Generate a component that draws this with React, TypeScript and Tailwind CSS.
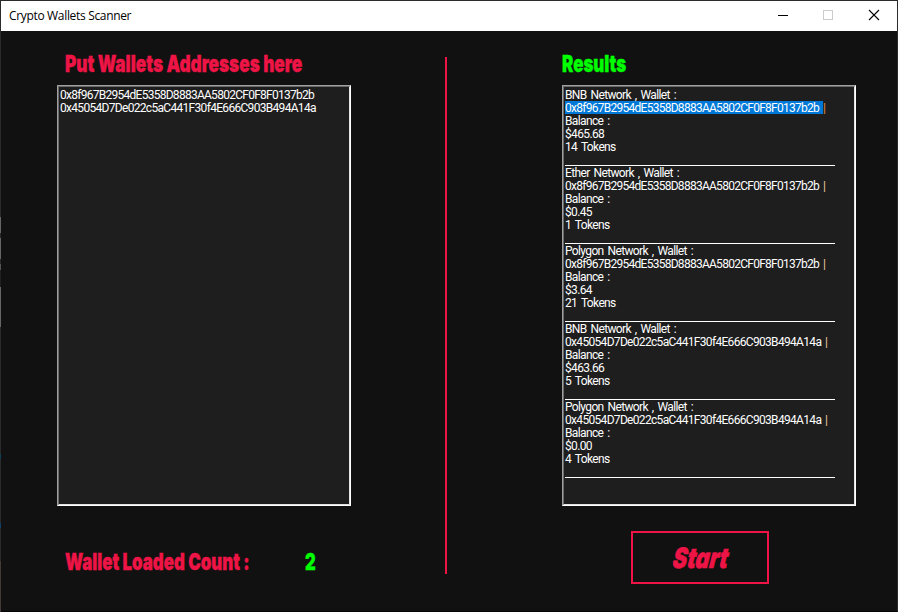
import type { ReactNode } from "react";

const FIRST = "0x8f967B2954dE5358D8883AA5802CF0F8F0137b2b";
const SECOND = "0x45054D7De022c5aC441F30f4E666C903B494A14a";

const results = [
  { network: "BNB", wallet: FIRST, balance: "$465.68", tokens: 14, selected: true },
  { network: "Ether", wallet: FIRST, balance: "$0.45", tokens: 1, selected: false },
  { network: "Polygon", wallet: FIRST, balance: "$3.64", tokens: 21, selected: false },
  { network: "BNB", wallet: SECOND, balance: "$463.66", tokens: 5, selected: false },
  { network: "Polygon", wallet: SECOND, balance: "$0.00", tokens: 4, selected: false },
];

function TextBox({ children }: { children: ReactNode }) {
  return (
    <div className="h-[421px] w-[294px] border border-t-[#a0a0a0] border-r-white border-b-white border-l-[#a0a0a0]">
      <div className="h-full border border-t-[#696969] border-r-[#e3e3e3] border-b-[#e3e3e3] border-l-[#696969] bg-[#1e1e1e] pt-px pl-px font-['Roboto',sans-serif] text-[12px] leading-[13px] tracking-[-0.64px] whitespace-pre text-white [word-spacing:1.6px]">
        {children}
      </div>
    </div>
  );
}

function Line({ children, className = "" }: { children: ReactNode; className?: string }) {
  return (
    <div className={className}>
      <div className="translate-y-px">{children}</div>
    </div>
  );
}

function Heading({ children, className }: { children: ReactNode; className: string }) {
  return (
    <div className={`origin-left font-['Inter',sans-serif] text-[23px] leading-7 font-black whitespace-pre [-webkit-text-stroke:0.35px_currentColor] ${className}`}>
      {children}
    </div>
  );
}

// One-pixel strip of the desktop that shows along the window's left edge.
function LeftEdge() {
  return (
    <div className="flex w-px shrink-0 flex-col bg-[#2b2b2b] pt-[217px]">
      <div className="h-4 bg-[#666666]" />
      <div className="h-[5px]" />
      <div className="h-[21px] bg-[#666666]" />
      <div className="h-[5px]" />
      <div className="h-1.5 bg-[#555555]" />
      <div className="h-[17px] bg-[#202020]" />
      <div className="h-10 bg-[#666666]" />
      <div className="mt-[127px] h-[5px] bg-[#123f58]" />
      <div className="mt-16 h-[5px] bg-[#123f68]" />
      <div className="mt-[33px] grow bg-[#443a37]" />
    </div>
  );
}

export default function App() {
  return (
    <div className="flex h-[612px] w-[898px] overflow-hidden">
      <LeftEdge />
      <div className="flex grow flex-col border-t border-r border-b border-t-[#2b2b2b] border-r-[#2b2b2b] border-b-[#050505] bg-[#111111]">
        <header className="flex h-[30px] shrink-0 items-center bg-white pl-2">
          <h1 className="grow font-['Open_Sans',sans-serif] text-[12px] tracking-[-0.33px] text-black">Crypto Wallets Scanner</h1>
          <svg className="h-[30px] w-[135px]" viewBox="0 0 135 30" fill="none" shapeRendering="crispEdges">
            <path d="M16 14.5h10" stroke="#000" />
            <path d="M61.5 9.5h9v9h-9z" stroke="#ccc" />
            <path d="m107 9 10 10m0-10-10 10" stroke="#000" strokeWidth="1.1" shapeRendering="auto" />
          </svg>
        </header>
        <main className="flex grow pl-14">
          <section className="w-[294px] shrink-0 pt-[19px]">
            <Heading className="ml-2 h-[35px] w-max scale-x-[0.748] text-[#ee1446]">Put Wallets Addresses here</Heading>
            <TextBox>
              <Line className="tracking-[-0.73px]">{FIRST}</Line>
              <Line className="tracking-[-0.69px]">{SECOND}</Line>
            </TextBox>
            <div className="mt-[42px] flex pl-2">
              <div className="w-60">
                <Heading className="w-max scale-x-[0.733] text-[#ee1446]">Wallet Loaded Count :</Heading>
              </div>
              <Heading className="scale-x-[0.72] text-[#00ff00]">2</Heading>
            </div>
          </section>
          <div className="mt-[26px] ml-[94px] h-[517px] w-0.5 shrink-0 bg-[#ee1446]" />
          <section className="ml-[115px] w-[294px] shrink-0 pt-[19px]">
            <Heading className="h-[35px] w-max scale-x-[0.735] text-[#00ff00]">Results</Heading>
            <TextBox>
              {results.map((r, i) => (
                <div key={i} className="h-[78px] w-[270px] border-b border-white">
                  <Line>{r.network} Network , Wallet :</Line>
                  <div className="flex">
                    <Line className={r.selected ? "w-[258px] bg-[#0078d7] tracking-[-0.73px]" : r.wallet === FIRST ? "w-[258px] tracking-[-0.73px]" : "w-[260px] tracking-[-0.68px]"}>
                      {r.wallet}
                    </Line>
                    <Line className={r.selected ? "text-[#e89040]" : "text-[#ecc99d]"}>|</Line>
                  </div>
                  <Line>Balance :</Line>
                  <Line>{r.balance}</Line>
                  <Line>{r.tokens} Tokens</Line>
                </div>
              ))}
            </TextBox>
            <button className="mt-[25px] ml-[69px] flex h-[53px] w-[138px] items-center justify-center border-2 border-[#ee1446] pl-0.5 font-['Inter',sans-serif] text-[28px] font-black text-[#ee1446] italic [-webkit-text-stroke:0.6px_currentColor]">
              <span className="scale-x-[0.77] -skew-x-9">Start</span>
            </button>
          </section>
        </main>
      </div>
    </div>
  );
}
